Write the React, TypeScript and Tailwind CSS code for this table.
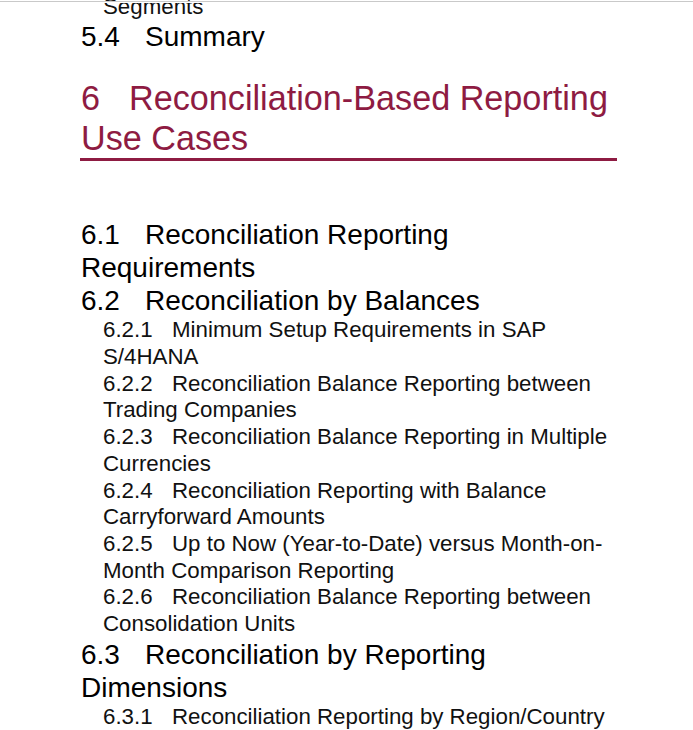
import React from 'react';

type Entry = { level: 2 | 3; num: string; title: string };

const entries: Entry[] = [
  { level: 2, num: '6.1', title: 'Reconciliation Reporting Requirements' },
  { level: 2, num: '6.2', title: 'Reconciliation by Balances' },
  { level: 3, num: '6.2.1', title: 'Minimum Setup Requirements in SAP S/4HANA' },
  { level: 3, num: '6.2.2', title: 'Reconciliation Balance Reporting between Trading Companies' },
  { level: 3, num: '6.2.3', title: 'Reconciliation Balance Reporting in Multiple Currencies' },
  { level: 3, num: '6.2.4', title: 'Reconciliation Reporting with Balance Carryforward Amounts' },
  { level: 3, num: '6.2.5', title: 'Up to Now (Year-to-Date) versus Month-on-Month Comparison Reporting' },
  { level: 3, num: '6.2.6', title: 'Reconciliation Balance Reporting between Consolidation Units' },
  { level: 2, num: '6.3', title: 'Reconciliation by Reporting Dimensions' },
  { level: 3, num: '6.3.1', title: 'Reconciliation Reporting by Region/Country' },
];

const TocLine: React.FC<{ entry: Entry }> = ({ entry }) => {
  if (entry.level === 2) {
    return (
      <div className="text-[28px] leading-[33px] text-black">
        <span className="inline-block w-[64px]">{entry.num}</span>
        {entry.title}
      </div>
    );
  }
  return (
    <div className="pl-[22px] text-[22.3px] leading-[26.7px] text-[#111]">
      <span className="inline-block w-[69px]">{entry.num}</span>
      {entry.title}
    </div>
  );
};

export default function App() {
  return (
    <div className="h-[730px] overflow-hidden bg-white" style={{ fontFamily: '"Liberation Sans", Arial, sans-serif' }}>
      <div className="relative z-10 h-[2px] border-t border-[#c9c9c9] mt-px bg-white" />
      <div className="mt-[-9.4px] pl-[81px] w-[617px]">
        <div className="pl-[22px] text-[22.3px] leading-[26.7px] text-[#111]">Segments</div>
        <div className="text-[28px] leading-[33px] text-black">
          <span className="inline-block w-[64px]">5.4</span>
          Summary
        </div>

        <h1 className="mt-[24.5px] -ml-px pl-px text-[34.2px] leading-[40px] text-[#8e1b42] border-b-[3px] border-[#8e1b42]">
          <span className="inline-block w-[48px]">6</span>
          Reconciliation-Based Reporting Use Cases
        </h1>

        <div className="mt-[57.5px]">
          {entries.map((e) => (
            <TocLine key={e.num} entry={e} />
          ))}
        </div>
      </div>
    </div>
  );
}
